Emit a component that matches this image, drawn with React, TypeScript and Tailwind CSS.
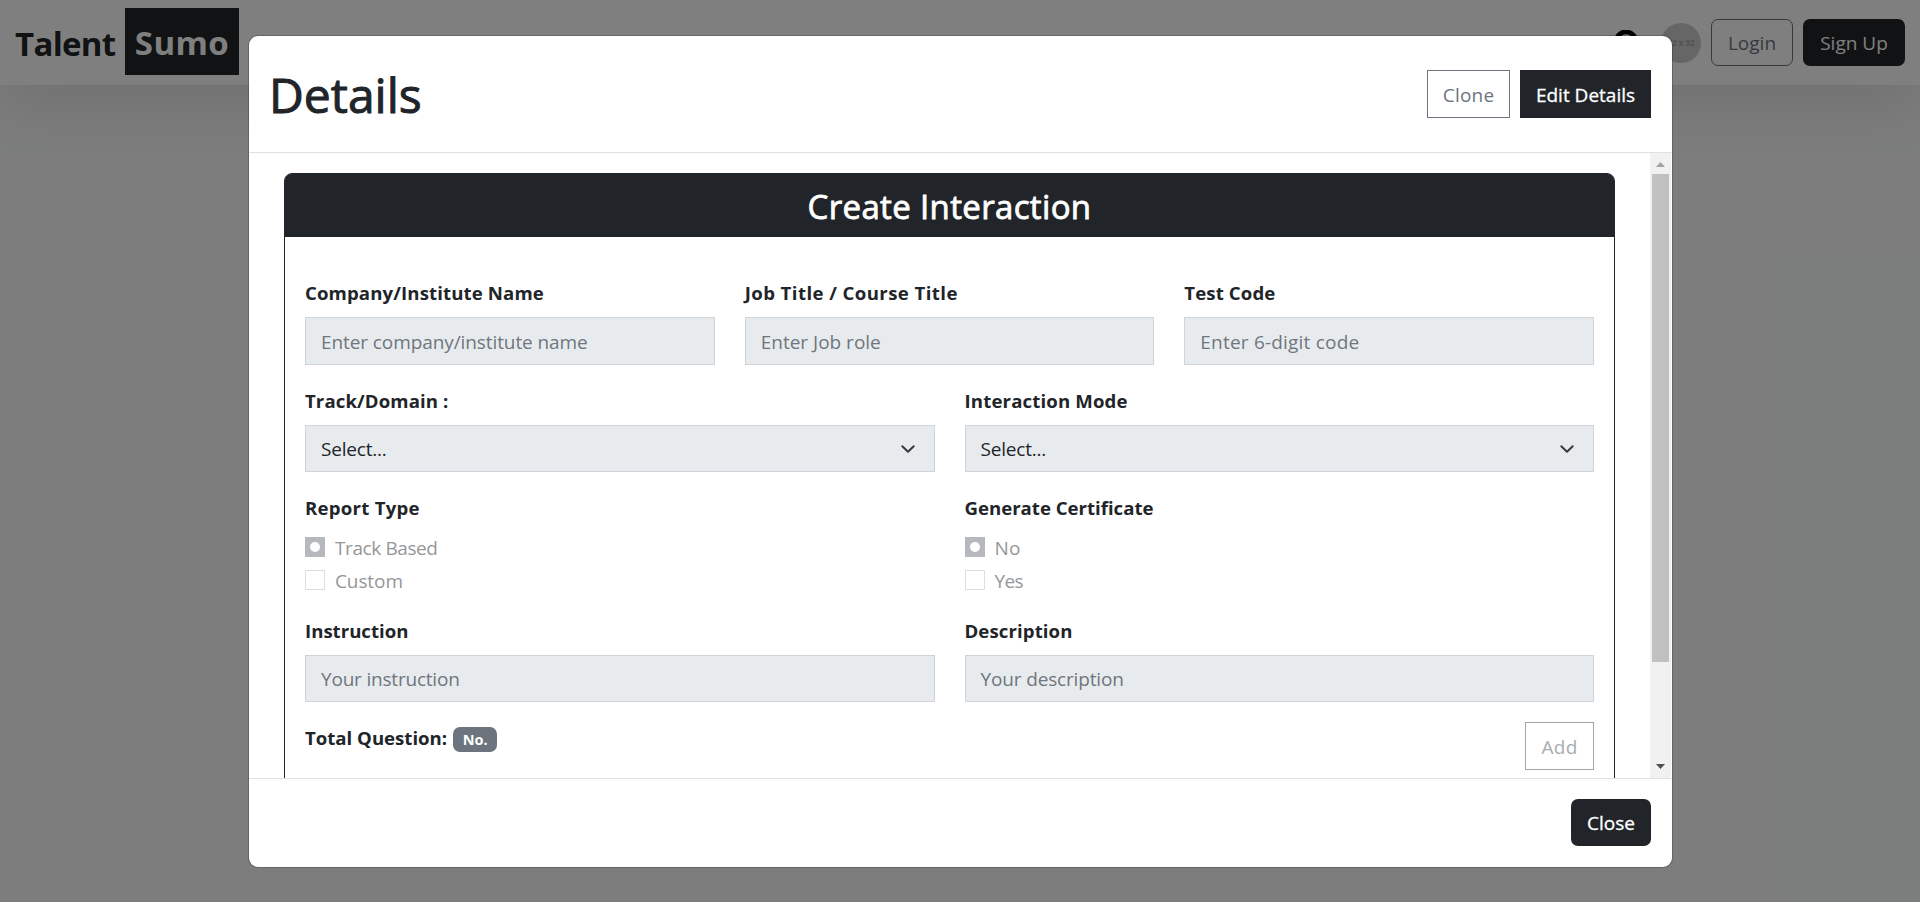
import React from "react";

type TextProps = { children: React.ReactNode; className?: string };

function Label({ children, className = "" }: TextProps) {
  return (
    <div className={`flex h-[30px] items-center whitespace-nowrap pt-[2px] text-[18.6px] font-bold ${className}`}>
      {children}
    </div>
  );
}

type FieldProps = {
  label: string;
  placeholder: string;
  height?: string;
  labelClass?: string;
  textClass?: string;
};

function Field({ label, placeholder, height = "h-12", labelClass = "", textClass = "" }: FieldProps) {
  return (
    <div className="flex flex-1 flex-col gap-[10px]">
      <Label className={labelClass}>{label}</Label>
      <div className={`flex items-center border border-[#ced4da] bg-[#e8ebee] px-[15px] pt-[2px] text-[19px] text-[#6f767d] ${height}`}>
        <span className={`whitespace-nowrap ${textClass}`}>{placeholder}</span>
      </div>
    </div>
  );
}

function SelectField({ label, labelClass = "" }: { label: string; labelClass?: string }) {
  return (
    <div className="flex flex-1 flex-col gap-[10px]">
      <Label className={labelClass}>{label}</Label>
      <div className="flex h-[47px] items-center justify-between border border-[#ced4da] bg-[#e8ebee] pl-[15px] pr-[18px] text-[19px]">
        <span className="pt-[2px] tracking-[-0.2px]">Select...</span>
        <svg className="size-4" viewBox="0 0 16 16" fill="none">
          <path d="m2.3 5.2 5.7 5.5 5.7-5.5" stroke="#343a40" strokeWidth="2" strokeLinecap="round" strokeLinejoin="round" />
        </svg>
      </div>
    </div>
  );
}

type RadioGroupProps = {
  label: string;
  options: { text: string; className: string }[];
  labelClass?: string;
};

function RadioGroup({ label, options, labelClass = "" }: RadioGroupProps) {
  return (
    <div className="flex flex-1 flex-col">
      <Label className={labelClass}>{label}</Label>
      <div className="mt-2.5 flex flex-col gap-[3px]">
        {options.map((o, i) => (
          <div key={o.text} className="flex h-[30px] items-center gap-2.5">
            {i === 0 ? (
              <span className="flex size-5 items-center justify-center bg-[#b5b9be]">
                <span className="size-2.5 rounded-full bg-white" />
              </span>
            ) : (
              <span className="size-5 border border-[#dedede]" />
            )}
            <span className={`pt-[2px] text-[19px] text-[#959799] ${o.className}`}>{o.text}</span>
          </div>
        ))}
      </div>
    </div>
  );
}

function Navbar() {
  return (
    <header className="flex h-[85px] items-center justify-between bg-white pl-[15px] pr-[15px] shadow-[0_20px_60px_rgba(0,0,0,0.1)]">
      <div className="flex items-center text-[33px] font-bold">
        <span className="w-[110px] pt-[2px] tracking-[-0.7px] text-[#212529]">Talent</span>
        <span className="-mt-[2px] flex h-[67px] w-[114px] items-center justify-center bg-[#212529] pt-[3px] tracking-[0.4px] text-white">Sumo</span>
      </div>
      <div className="flex items-center text-[19px]">
        <svg className="mr-[22px] size-[26px]" viewBox="0 0 26 26" fill="none" stroke="#000" strokeWidth="4.7">
          <circle cx="13" cy="11.5" r="9.7" />
        </svg>
        <span className="mr-2.5 flex size-10 items-center justify-center whitespace-nowrap rounded-full bg-[#ccc] text-[8px] font-bold text-[#a2a2a2]">32 x 32</span>
        <span className="mr-2.5 flex h-[47px] w-[82px] items-center justify-center rounded-[7px] border border-[#6c757d] pt-[2px] text-[#6c757d]">Login</span>
        <span className="flex h-[47px] w-[102px] items-center justify-center rounded-[7px] bg-[#212529] pt-[2px] text-white">Sign Up</span>
      </div>
    </header>
  );
}

function Scrollbar() {
  return (
    <div className="mr-px flex w-[21px] flex-col items-center bg-[#f1f1f1]">
      <div className="flex h-[21px] items-center justify-center pt-[2px]">
        <svg width="9" height="5" viewBox="0 0 9 5"><path d="M0 5 4.5 0 9 5z" fill="#a3a3a3" /></svg>
      </div>
      <div className="h-[488px] w-[17px] bg-[#c1c1c1]" />
      <div className="mt-auto flex h-[23px] items-center justify-center">
        <svg width="9" height="5" viewBox="0 0 9 5"><path d="M0 0 4.5 5 9 0z" fill="#505050" /></svg>
      </div>
    </div>
  );
}

function Card() {
  return (
    <section className="h-[760px] rounded-[8px] border border-[#212529]">
      <h2 className="flex h-[63px] items-center justify-center rounded-t-[6px] bg-[#212529] pt-[2px] text-[33px] tracking-[0.35px] text-white [-webkit-text-stroke:0.8px_#fff]">
        Create Interaction
      </h2>
      <div className="px-5 pt-10">
        <div className="flex gap-[30px]">
          <Field label="Company/Institute Name" placeholder="Enter company/institute name" labelClass="tracking-[0.12px]" textClass="tracking-[-0.09px]" />
          <Field label="Job Title / Course Title" placeholder="Enter Job role" labelClass="tracking-[0.42px]" />
          <Field label="Test Code" placeholder="Enter 6-digit code" labelClass="tracking-[0.12px]" textClass="tracking-[0.2px]" />
        </div>
        <div className="mt-5 flex gap-[30px]">
          <SelectField label="Track/Domain :" labelClass="tracking-[0.1px]" />
          <SelectField label="Interaction Mode" labelClass="tracking-[0.15px]" />
        </div>
        <div className="mt-5 flex gap-[30px]">
          <RadioGroup
            label="Report Type"
            labelClass="tracking-[0.25px]"
            options={[
              { text: "Track Based", className: "tracking-[-0.4px]" },
              { text: "Custom", className: "tracking-[-0.1px]" },
            ]}
          />
          <RadioGroup
            label="Generate Certificate"
            options={[
              { text: "No", className: "tracking-[0.3px]" },
              { text: "Yes", className: "tracking-[-0.6px]" },
            ]}
          />
        </div>
        <div className="mt-5 flex gap-[30px]">
          <Field label="Instruction" placeholder="Your instruction" height="h-[47px]" textClass="tracking-[-0.2px]" />
          <Field label="Description" placeholder="Your description" height="h-[47px]" labelClass="tracking-[0.1px]" textClass="tracking-[-0.15px]" />
        </div>
        <div className="mt-5 flex items-start justify-between">
          <div className="flex items-center gap-1.5">
            <Label>Total Question:</Label>
            <span className="mt-[5px] flex h-[25px] w-11 items-center justify-center rounded-[7px] bg-[#6c757d] text-[14.5px] font-bold text-white">No.</span>
          </div>
          <span className="flex h-12 w-[69px] items-center justify-center border border-[#a2a5a9] pt-[2px] text-[19px] tracking-[0.3px] text-[#a7acb1]">Add</span>
        </div>
      </div>
    </section>
  );
}

export default function App() {
  return (
    <div className="relative h-[902px] w-[1920px] overflow-hidden bg-[#f8fbf9] font-['Open_Sans','Noto_Sans',sans-serif] text-[#212529]">
      <Navbar />
      <div className="absolute inset-0 flex items-start bg-black/50 pl-[248px] pt-[35px]">
        <div className="flex h-[833px] w-[1425px] flex-col overflow-hidden rounded-[10px] border border-black/20 bg-white bg-clip-padding">
          <div className="flex h-[117px] items-center justify-between border-b border-[#dee2e6] pl-5 pr-[21px]">
            <h1 className="pt-[2px] text-[48px] [-webkit-text-stroke:1px_#212529]">Details</h1>
            <div className="flex gap-2.5 text-[19px]">
              <span className="flex h-12 w-[83px] items-center justify-center border border-[#6c757d] pt-[2px] tracking-[0.2px] text-[#6c757d]">Clone</span>
              <span className="flex h-12 w-[131px] items-center justify-center bg-[#212529] pt-[2px] text-white [-webkit-text-stroke:0.3px_#fff]">Edit Details</span>
            </div>
          </div>
          <div className="flex h-[625px] overflow-hidden">
            <div className="flex-1 pl-[35px] pr-[35px] pt-5"><Card /></div>
            <Scrollbar />
          </div>
          <div className="flex flex-1 items-start justify-end border-t border-[#dee2e6] pl-5 pr-[21px] pt-5">
            <span className="flex h-[47px] w-20 items-center justify-center rounded-[7px] bg-[#212529] pt-[2px] text-[19px] text-white [-webkit-text-stroke:0.3px_#fff]">Close</span>
          </div>
        </div>
      </div>
    </div>
  );
}
